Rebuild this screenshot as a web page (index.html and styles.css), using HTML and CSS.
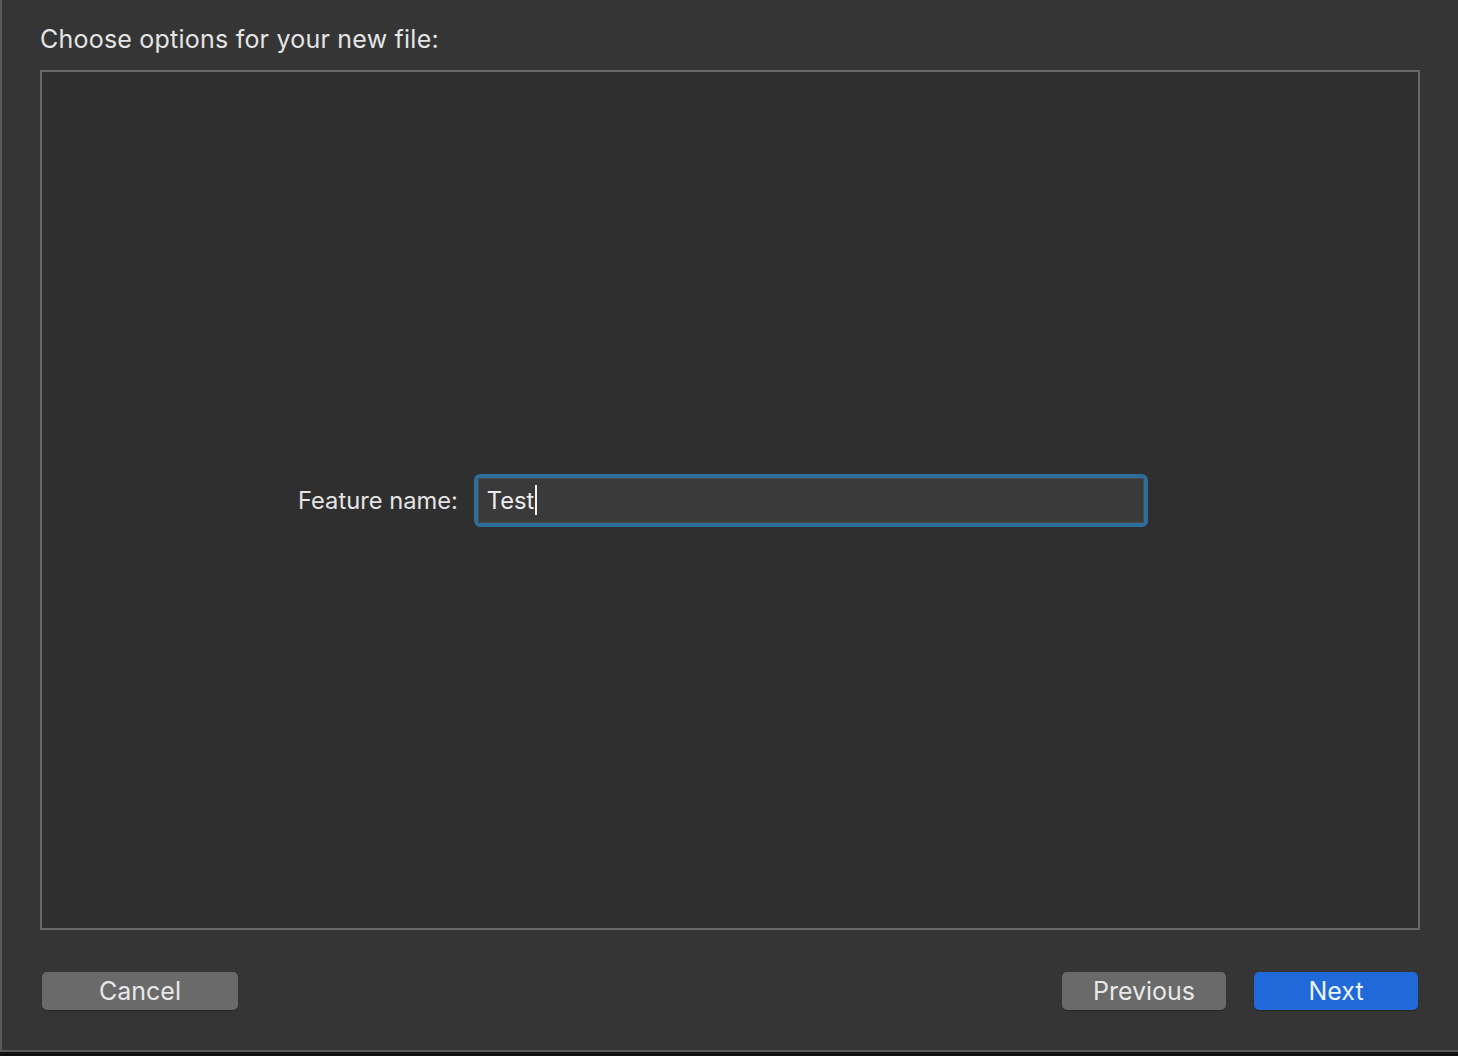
FILE: index.html
```html
<!DOCTYPE html>
<html lang="en">
<head>
    <meta charset="UTF-8">
    <title>Choose options for your new file</title>
    <link rel="stylesheet" href="styles.css">
</head>
<body>
    <div class="window">
        <h1 class="title">Choose options for your new file:</h1>

        <!-- Options panel -->
        <div class="options-panel">
            <div class="field-row">
                <label class="field-label" for="feature-name">Feature name:</label>
                <div class="focus-ring">
                    <div class="text-field" id="feature-name">Test<span class="caret"></span></div>
                </div>
            </div>
        </div>

        <!-- Footer buttons -->
        <div class="button-bar">
            <button class="btn">Cancel</button>
            <div class="spacer"></div>
            <button class="btn btn-previous">Previous</button>
            <button class="btn btn-primary">Next</button>
        </div>
    </div>
    <div class="bottom-strip"></div>
</body>
</html>
```

FILE: styles.css
```css
* {
    margin: 0;
    padding: 0;
    box-sizing: border-box;
}

body {
    font-family: Inter, 'Liberation Sans', sans-serif;
    background: #353535;
    color: #e4e4e4;
    width: 1458px;
    height: 1056px;
    overflow: hidden;
}

.window {
    height: 1052px;
    border-left: 2px solid #5a5a5a;
    border-bottom: 2px solid #5a5a5a;
    padding: 22px 38px 0 38px;
    display: flex;
    flex-direction: column;
}

.bottom-strip { height: 4px; background: #111; }

.title {
    font-size: 25px;
    font-weight: 400;
    line-height: 34px;
    color: #e4e4e4;
    letter-spacing: 0.22px;
}

.options-panel {
    margin-top: 14px;
    height: 860px;
    border: 2px solid #686868;
    background: #2f2f2f;
    display: flex;
    align-items: center;
    padding-left: 256px;
}

.field-row {
    display: flex;
    align-items: center;
    gap: 16px;
    margin-top: 0;
}

.field-label {
    font-size: 23.7px;
    color: #e4e4e4;
}

.focus-ring {
    width: 674px;
    height: 53px;
    border: 4px solid #2e6e9b;
    border-radius: 6px;
    background: #3a3a3a;
}

.text-field {
    height: 100%;
    border: 1px solid #4a4a4a;
    padding-left: 8px;
    font-size: 23.7px;
    line-height: 43px;
    color: #ececec;
    display: flex;
    align-items: center;
}

.caret {
    display: inline-block;
    width: 2px;
    height: 30px;
    background: #f2f2f2;
    margin-left: 1px;
}

.button-bar {
    display: flex;
    align-items: center;
    margin-top: 42px;
    padding: 0 0 0 2px;
    margin-right: 2px;
}

.spacer { flex: 1; }

.btn {
    font-family: Inter, 'Liberation Sans', sans-serif;
    font-size: 25px;
    color: #e8e8e8;
    background: #6a6a6a;
    border: none;
    border-radius: 5px;
    height: 38px;
    width: 196px;
    box-shadow: 0 1px 1px rgba(0, 0, 0, 0.3);
}

.btn-previous { width: 164px; margin-right: 28px; }

.btn-primary { width: 164px; background: #1f69d8; color: #eef2fa; }
```
